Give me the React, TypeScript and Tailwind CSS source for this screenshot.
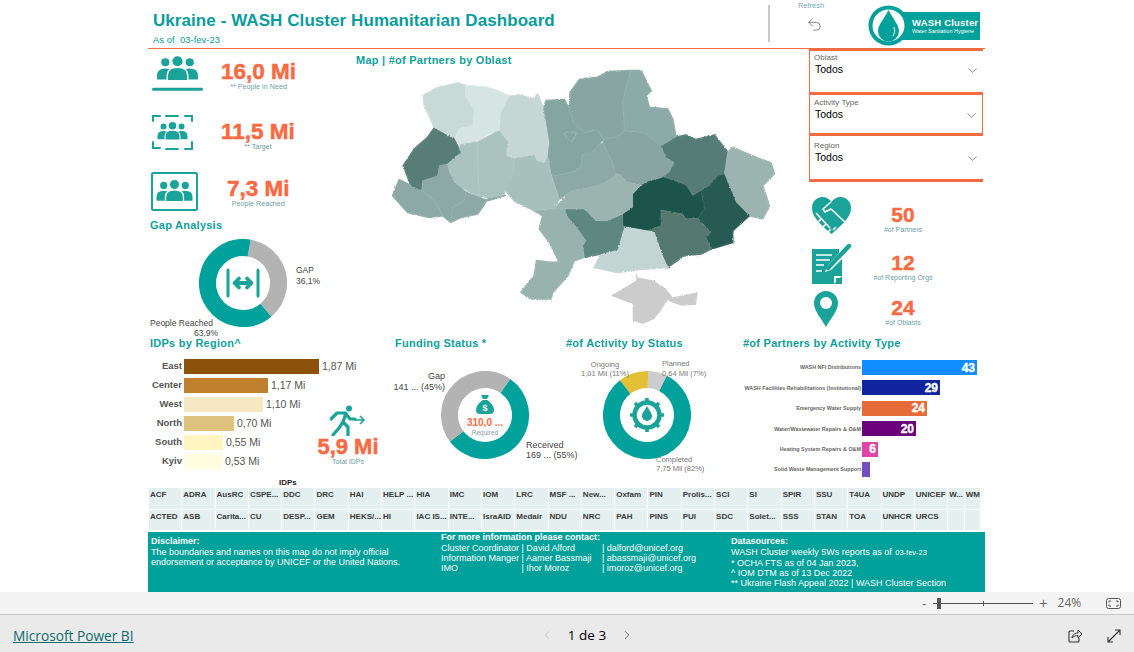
import { ChevronDown, ChevronLeft, ChevronRight, Undo2 } from "lucide-react";

const TEAL = "#1ba39a";

const oblasts: [string, string][] = [
  ["#c8d9d6", "157,108 205,85 260,72 285,80 283,110 310,150 305,200 265,208 250,240 190,207 175,170 160,140"],
  ["#d6e5e3", "285,80 345,85 385,98 415,112 390,160 385,215 355,222 330,240 280,255 265,265 252,240 265,208 305,200 310,150 283,110"],
  ["#c5d6d3", "415,112 450,110 490,120 500,105 518,150 525,190 535,250 530,290 520,312 498,305 490,288 430,298 405,290 412,250 385,215 390,160"],
  ["#85a5a1", "518,150 525,125 580,122 595,150 610,195 640,220 680,212 697,240 685,255 660,285 635,285 630,325 600,340 555,350 540,345 530,290 535,250 525,190"],
  ["#88a5a2", "595,150 598,100 625,62 680,55 710,38 780,35 770,70 755,130 762,215 735,235 697,240 680,212 640,220 610,195"],
  ["#8caaa7", "780,35 810,35 840,95 825,110 835,145 890,150 905,180 915,235 870,262 820,222 762,215 755,130 770,70"],
  ["#88a5a2", "697,240 735,235 762,215 820,222 870,262 885,295 910,310 895,340 865,360 835,365 810,378 770,370 745,345 735,345 715,290 697,255"],
  ["#547b75", "870,262 915,235 945,228 975,242 1030,228 1070,280 1060,345 1040,350 1015,380 990,395 965,410 945,378 890,368 865,360 895,340 910,310 885,295"],
  ["#9cb4b0", "1085,265 1130,285 1200,312 1210,345 1175,380 1195,440 1175,480 1135,470 1095,430 1060,345 1070,280"],
  ["#265a53", "1040,350 1060,345 1095,430 1135,470 1085,515 1085,550 1020,570 1005,535 1020,520 980,478 1000,450 990,395 1015,380"],
  ["#1e524b", "838,365 880,355 945,378 965,410 990,395 1000,450 980,478 945,480 935,465 870,453 870,500 830,515 755,500 755,465 785,445 785,405 810,380"],
  ["#54796f", "870,453 935,465 945,480 980,478 1020,520 1005,535 1020,570 990,585 940,590 890,625 850,520 830,515 870,500"],
  ["#c2d5d2", "760,505 830,515 850,520 870,585 890,625 795,632 740,640 670,625 690,585 740,572 755,520"],
  ["#5f8781", "580,450 640,450 675,485 710,485 755,465 755,500 760,505 755,520 740,572 690,585 640,595 635,560 645,545 620,510 590,475"],
  ["#9cb4b0", "550,450 600,395 680,380 710,365 745,345 770,370 810,378 785,405 785,445 755,465 710,485 675,485 640,450 580,450"],
  ["#8ca9a5", "540,345 555,350 600,340 630,325 635,285 660,285 685,255 697,255 715,290 735,345 710,365 680,380 600,395 565,420"],
  ["#a8c0bc", "430,298 490,288 498,305 520,312 530,290 540,345 565,420 545,450 510,455 490,455 430,425 400,390 425,350"],
  ["#aac2be", "320,250 385,215 412,250 405,290 430,298 425,350 400,390 400,405 350,415 325,410 320,330"],
  ["#abc3bf", "228,315 270,255 320,250 320,330 325,410 290,395 250,370 235,340"],
  ["#587d76", "190,207 250,240 270,280 228,315 205,320 200,350 155,365 150,395 120,380 97,320 130,270 170,235"],
  ["#8ca9a5", "205,320 228,315 235,340 250,370 285,400 280,425 245,445 240,490 215,470 190,425 155,395 155,365 200,350"],
  ["#8ca9a5", "85,362 120,380 150,395 190,425 215,470 175,475 110,460 65,410"],
  ["#8ca9a5", "285,400 350,425 400,410 350,420 320,465 270,475 240,490 245,445 280,425"],
  ["#98b2ae", "490,455 545,450 580,450 590,475 620,510 645,545 635,560 640,595 610,605 590,650 545,700 540,720 480,720 450,700 490,650 497,605 540,610 565,610 535,550 505,510 515,470"],
  ["#cccccc", "795,640 800,655 850,665 885,690 905,715 980,700 975,738 930,740 890,725 850,780 815,795 785,785 785,735 720,710 795,665"],
];

const idps = [
  { name: "East", value: "1,87 Mi", w: 135, color: "#8c510a" },
  { name: "Center", value: "1,17 Mi", w: 84, color: "#bf812d" },
  { name: "West", value: "1,10 Mi", w: 79, color: "#f6e8c3" },
  { name: "North", value: "0,70 Mi", w: 50, color: "#dfc27d" },
  { name: "South", value: "0,55 Mi", w: 39, color: "#fff5c0" },
  { name: "Kyiv", value: "0,53 Mi", w: 38, color: "#fffde0" },
];

const activities = [
  { name: "WASH NFI Distributions", value: "43", w: 115, color: "#118dff" },
  { name: "WASH Facilities Rehabilitations (Institutional)", value: "29", w: 78, color: "#12239e" },
  { name: "Emergency Water Supply", value: "24", w: 65, color: "#e66c37" },
  { name: "Water/Wastewater Repairs & O&M", value: "20", w: 54, color: "#6b007b" },
  { name: "Heating System Repairs & O&M", value: "6", w: 16, color: "#e044a7" },
  { name: "Solid Waste Management Support", value: "", w: 8, color: "#744ec2" },
];

const partners = [
  "ACF", "ADRA", "AusRC", "CSPE...", "DDC", "DRC", "HAI", "HELP ...", "HIA", "IMC", "IOM", "LRC", "MSF ...", "New...", "Oxfam", "PIN", "Prolis...", "SCI", "SI", "SPIR", "SSU", "T4UA", "UNDP", "UNICEF", "W...", "WM",
  "ACTED", "ASB", "Carita...", "CU", "DESP...", "GEM", "HEKS/...", "HI", "IAC IS...", "INTE...", "IsraAID", "Medair", "NDU", "NRC", "PAH", "PINS", "PUI", "SDC", "Solet...", "SSS", "STAN", "TOA", "UNHCR", "URCS", "", "",
];

function PeopleGlyph() {
  return (
    <g fill={TEAL}>
      <circle cx="8" cy="6" r="4" />
      <circle cx="32" cy="6" r="4" />
      <circle cx="20" cy="5" r="5" />
      <path d="M0 23v-4q0-7 8-7t8 7v4z" />
      <path d="M24 23v-4q0-7 8-7t8 7v4z" />
      <path d="M10 24v-5q0-8 10-8t10 8v5z" stroke="#fff" strokeWidth="1.4" />
    </g>
  );
}

function Donut({ segments, rotate }: { segments: { p: number; color: string }[]; rotate: number }) {
  let offset = 0;
  return (
    <svg width="88" height="88" viewBox="0 0 88 88" className="block">
      <g transform={`rotate(${rotate - 90} 44 44)`}>
        {segments.map((s) => {
          const el = (
            <circle
              key={s.color}
              cx="44"
              cy="44"
              r="35.5"
              fill="none"
              stroke={s.color}
              strokeWidth="17"
              pathLength={100}
              strokeDasharray={`${s.p} ${100 - s.p}`}
              strokeDashoffset={-offset}
            />
          );
          offset += s.p;
          return el;
        })}
      </g>
    </svg>
  );
}

function Slicer({ label, className }: { label: string; className: string }) {
  return (
    <div className={`border-[#f26b43] pl-[4px] pr-[2px] ${className}`}>
      <div className="text-[8px] leading-[11px] text-[#666]">{label}</div>
      <div className="flex h-[14px] items-center justify-between pl-[1px] pr-[1px] text-[10.5px] text-black">
        Todos
        <ChevronDown size={15} strokeWidth={0.9} className="text-[#333]" />
      </div>
    </div>
  );
}

function Kpi({ value, label }: { value: string; label: string }) {
  return (
    <div className="flex flex-col items-center">
      <div className="text-[22.5px] font-bold leading-[22px] text-[#f96a42] [-webkit-text-stroke:0.5px_#f96a42]">{value}</div>
      <div className="text-[7.2px] leading-[7px] text-[#6f9ea6]">{label}</div>
    </div>
  );
}

function SmallKpi({ value, label }: { value: string; label: string }) {
  return (
    <div className="flex w-[80px] flex-col items-center">
      <div className="text-[21px] font-bold leading-[20px] text-[#f96a42] [-webkit-text-stroke:0.4px_#f96a42]">{value}</div>
      <div className="text-[7px] leading-[9px] text-[#6f9ea6]">{label}</div>
    </div>
  );
}

function Title({ children, className }: { children: string; className?: string }) {
  return <div className={`text-[11px] font-bold leading-[13px] tracking-[0.25px] text-[#0f9f9c] ${className ?? ""}`}>{children}</div>;
}

export default function App() {
  return (
    <div className="flex h-[652px] w-[1134px] flex-col overflow-hidden bg-white font-['Liberation_Sans',sans-serif]">
      <div className="ml-[148px] flex h-[592px] w-[837px] flex-col">
        {/* header */}
        <div className="flex h-[49px] border-b border-[#f26b43]">
          <div className="w-[620px] pl-[5px] pt-[10px]">
            <div className="text-[17px] font-bold leading-[22px] tracking-[0.07px] text-[#0a9c9c]">Ukraine - WASH Cluster Humanitarian Dashboard</div>
            <div className="mt-[2px] text-[9.5px] leading-[12px] text-[#0a9c9c]">As of&nbsp; 03-fev-23</div>
          </div>
          <div className="mt-[5px] h-[37px] w-[2px] bg-[#c8c8c8]" />
          <div className="ml-[28px] flex w-[26px] flex-col items-center pt-[1px]">
            <div className="text-[7.5px] leading-[9px] text-[#7aa9b5]">Refresh</div>
            <Undo2 size={17} strokeWidth={1} className="mt-[6px] ml-[6px] text-[#555]" />
          </div>
          <div className="relative ml-[44px] mt-[5px] h-[41px] w-[112px]">
            <div className="absolute left-[30px] top-[7px] flex h-[28px] w-[82px] flex-col justify-center bg-[#00a19a] pl-[14px] text-white">
              <div className="text-[9.5px] font-bold leading-[11px] tracking-[0.2px]">WASH Cluster</div>
              <div className="text-[5.5px] leading-[7px]">Water Sanitation Hygiene</div>
            </div>
            <svg width="41" height="41" viewBox="0 0 41 41" className="absolute left-0 top-0">
              <circle cx="20.5" cy="20.5" r="20" fill="#00a19a" />
              <circle cx="20.5" cy="20.5" r="16" fill="#fff" />
              <path d="M20.5 5C16 14 10 20 10 26a10.5 10.5 0 0 0 21 0C31 20 25 14 20.5 5z" fill="#00a19a" />
              <path d="M26 22q2 5-1 9" fill="none" stroke="#fff" strokeWidth="1" />
            </svg>
          </div>
        </div>

        {/* upper part */}
        <div className="flex h-[286px]">
          <div className="relative w-[202px]">
            <div className="flex h-[60px] pl-[4px] pt-[7px]">
              <svg width="51" height="37" viewBox="0 0 50 36" className="block">
                <g transform="translate(5 0)">
                  <PeopleGlyph />
                </g>
                <rect x="0" y="31" width="50" height="3" rx="1.5" fill={TEAL} />
              </svg>
              <div className="ml-[18px] mt-[5px]">
                <Kpi value="16,0 Mi" label="** People in Need" />
              </div>
            </div>
            <div className="flex h-[58px] pl-[4px] pt-[6px]">
              <svg width="41" height="35" viewBox="0 0 41 35" className="block">
                <path d="M1 6V1h7M14 1h12M33 1h7v5M1 27v6h7M14 34h12M33 34h7v-7" fill="none" stroke={TEAL} strokeWidth="2" strokeLinecap="round" />
                <g transform="translate(5.5 7) scale(.75)">
                  <PeopleGlyph />
                </g>
              </svg>
              <div className="ml-[28px] mt-[6px]">
                <Kpi value="11,5 Mi" label="** Target" />
              </div>
            </div>
            <div className="flex h-[55px] pl-[3px]">
              <svg width="47" height="39" viewBox="0 0 47 39" className="mt-[5px] block">
                <rect x="1" y="1" width="45" height="37" rx="1.5" fill="none" stroke={TEAL} strokeWidth="2" />
                <g transform="translate(5.5 8) scale(.9)">
                  <PeopleGlyph />
                </g>
              </svg>
              <div className="ml-[29px] mt-[11px]">
                <Kpi value="7,3 Mi" label="People Reached" />
              </div>
            </div>
            <Title className="ml-[2px] mt-[-3px]">Gap Analysis</Title>

            {/* gap donut */}
            <div className="relative ml-[51px] mt-[7px] h-[88px] w-[88px]">
              <Donut rotate={10} segments={[{ p: 36.1, color: "#b3b3b3" }, { p: 63.9, color: "#00a19a" }]} />
              <svg width="34" height="30" viewBox="0 0 34 30" className="absolute left-[27px] top-[29px]">
                <g stroke={TEAL} strokeLinecap="round" fill="none">
                  <path d="M2 2v26M32 2v26" strokeWidth="3" />
                  <path d="M9 15h16M13 10.500L8.500 15l4.500 4.500M21 10.500l4.500 4.500-4.500 4.500" strokeWidth="3.8" strokeLinejoin="round" />
                </g>
              </svg>
              <div className="absolute left-[97px] top-[26px] w-[40px] text-[8.5px] leading-[11px] text-[#444]">
                GAP
                <br />
                36,1%
              </div>
              <div className="absolute left-[-49px] top-[79px] w-[80px] text-[8.5px] leading-[10px] text-[#444]">
                People Reached
                <div className="pl-[44px]">63,9%</div>
              </div>
            </div>
          </div>

          <div className="w-[459px] pl-[6px] pt-[5px]">
            <Title className="tracking-[0.05px]">Map | #of Partners by Oblast</Title>
            <svg width="410" height="270" viewBox="0 30 1230 810" className="ml-[15px] mt-[2px] block">
              <defs>
                <filter id="rough" x="-2%" y="-2%" width="104%" height="104%">
                  <feTurbulence type="fractalNoise" baseFrequency="0.22" numOctaves="2" seed="4" />
                  <feDisplacementMap in="SourceGraphic" scale="7" xChannelSelector="R" yChannelSelector="G" />
                </filter>
              </defs>
              <g filter="url(#rough)">
                {/* first pass closes the seams between neighbouring oblasts */}
                {oblasts.slice(0, -1).map(([fill, points]) => (
                  <polygon key={points} points={points} fill={fill} stroke={fill} strokeWidth="5" strokeLinejoin="round" />
                ))}
                {oblasts.map(([fill, points]) => (
                  <polygon key={points} points={points} fill={fill} stroke="#ffffff" strokeOpacity="0.22" strokeWidth="1.2" strokeLinejoin="round" />
                ))}
                <path d="M578 222q12-8 22 0 12-8 16 0-4 16-16 28-14-12-22-28z" fill="none" stroke="#a9c0bd" strokeWidth="2" />
              </g>
            </svg>
          </div>

          <div className="w-[176px]">
            <div className="w-[174px]">
              <Slicer label="Oblast" className="h-[43px] border-l border-t-2 pt-[1px]" />
              <Slicer label="Activity Type" className="h-[44px] border-x border-y-[3px] pt-[2px]" />
              <Slicer label="Region" className="h-[46px] border-l border-b-[3px] pt-[4px]" />
            </div>
            <div className="mt-[15px] flex flex-col pl-[3px]">
              <div className="flex h-[47px] items-start">
                <svg width="39" height="40" viewBox="0 0 39 40" className="block">
                  <path d="M19.5 37C8 27 0 20 0 11 0 4 5 0 10.5 0c4 0 7 2 9 5 2-3 5-5 9-5C34 0 39 4 39 11c0 9-8 16-19.5 26z" fill={TEAL} />
                  <path d="M19 5l-8 7 2 3 6-3 14 13M4 16l14 15M9 22l-3 3M14 27l-3 3M19 32l-3 3M24 30l-3 3" fill="none" stroke="#fff" strokeWidth="1.6" strokeLinejoin="round" />
                </svg>
                <div className="ml-[12px] mt-[8px]">
                  <SmallKpi value="50" label="#of Partners" />
                </div>
              </div>
              <div className="flex h-[47px] items-start">
                <svg width="40" height="40" viewBox="0 0 40 40" className="block">
                  <path d="M0 5h27v4L15 22l-2 6 6-2 11-11v25H20l-1 0H0z" fill={TEAL} />
                  <path d="M4 11h16M4 16h14M4 21h8M4 27h6" stroke="#fff" strokeWidth="1.5" />
                  <path d="M22 40v-8h8z" fill="#fff" />
                  <path d="M24 34h5l-5 5z" fill={TEAL} />
                  <path d="M16 24L37 2" stroke={TEAL} strokeWidth="4.5" strokeLinecap="round" />
                </svg>
                <div className="ml-[11px] mt-[9px]">
                  <SmallKpi value="12" label="#of Reporting Orgs" />
                </div>
              </div>
              <div className="flex items-start pl-[2px]">
                <svg width="24" height="37" viewBox="0 0 24 37" className="block">
                  <path d="M12 36C7 27 0 20 0 12a12 12 0 0 1 24 0c0 8-7 15-12 24z" fill={TEAL} />
                  <circle cx="12" cy="12" r="6" fill="#fff" />
                </svg>
                <div className="ml-[25px] mt-[7px]">
                  <SmallKpi value="24" label="#of Oblasts" />
                </div>
              </div>
            </div>
          </div>
        </div>

        {/* lower charts */}
        <div className="flex h-[142px]">
          <div className="relative w-[237px] pt-[2px]">
            <Title className="ml-[2px]">IDPs by Region^</Title>
            <div className="mt-[9px] flex flex-col gap-[4px]">
              {idps.map((r) => (
                <div key={r.name} className="flex h-[15px] items-center">
                  <div className="w-[36px] pr-[2px] text-right text-[9.5px] font-bold text-[#555]">{r.name}</div>
                  <div className="h-[15px]" style={{ width: r.w, backgroundColor: r.color }} />
                  <div className="ml-[3px] text-[10.5px] text-[#555]">{r.value}</div>
                </div>
              ))}
            </div>
            <div className="absolute left-[165px] top-[70px] flex w-[70px] flex-col items-center">
              <svg width="36" height="31" viewBox="0 0 36 31" className="block">
                <circle cx="19" cy="3.5" r="3" fill={TEAL} />
                <path d="M1 14L7 8l9 0-3 9 5 5v8M13 17l-4 6-6 7M16 9l4 5 5 0" fill="none" stroke={TEAL} strokeWidth="3.2" strokeLinecap="round" strokeLinejoin="round" />
                <path d="M24 15h10M30 11l4 4-4 4" fill="none" stroke={TEAL} strokeWidth="1.6" />
              </svg>
              <div className="text-[22px] font-bold leading-[22px] text-[#f96a42] [-webkit-text-stroke:0.5px_#f96a42]">5,9 Mi</div>
              <div className="text-[7px] leading-[7px] text-[#6f9ea6]">Total IDPs</div>
            </div>
          </div>

          <div className="w-[180px] pt-[2px]">
            <Title className="ml-[10px]">Funding Status *</Title>
            <div className="relative ml-[56px] mt-[21px] h-[88px] w-[88px]">
              <Donut rotate={35} segments={[{ p: 55, color: "#00a19a" }, { p: 45, color: "#b3b3b3" }]} />
              <div className="absolute inset-0 flex flex-col items-center pt-[24px]">
                <svg width="18" height="19" viewBox="0 0 18 19" className="block">
                  <path d="M5 0h8l-2 4H7zM7 5h4c3 2 7 6 7 10 0 3-2 4-4 4H4c-2 0-4-1-4-4 0-4 4-8 7-10z" fill={TEAL} />
                  <text x="9" y="16" fontSize="9" fontWeight="700" fill="#fff" textAnchor="middle">$</text>
                </svg>
                <div className="mt-[3px] text-[10px] font-bold leading-[11px] text-[#f96a42]">310,0 ...</div>
                <div className="mt-[1px] text-[6.5px] leading-[8px] text-[#8a9ea3]">Required</div>
              </div>
              <div className="absolute left-[-48px] top-[0px] w-[52px] text-right text-[9px] leading-[11px] text-[#444]">
                <div>Gap</div>
                141 ... (45%)
              </div>
              <div className="absolute left-[85px] top-[69px] w-[60px] text-[9px] leading-[10px] text-[#444]">
                Received
                <br />
                169 ... (55%)
              </div>
            </div>
          </div>

          <div className="w-[175px] pt-[2px]">
            <Title className="ml-[1px]">#of Activity by Status</Title>
            <div className="relative ml-[38px] mt-[21px] h-[88px] w-[88px]">
              <Donut
                rotate={-38}
                segments={[
                  { p: 11, color: "#e2bf35" },
                  { p: 7, color: "#cccccc" },
                  { p: 82, color: "#00a19a" },
                ]}
              />
              <svg width="36" height="36" viewBox="0 0 36 36" className="absolute left-[26px] top-[26px]">
                <circle cx="18" cy="18" r="12.5" fill="none" stroke={TEAL} strokeWidth="4.5" />
                <g stroke={TEAL} strokeWidth="3.6">
                  <path d="M18 1v5M18 30v5M1 18h5M30 18h5M6 6l3.5 3.5M26.5 26.5L30 30M6 30l3.5-3.5M26.5 9.5L30 6" />
                </g>
                <path d="M18 9c-2 4-5 7-5 10a5 5 0 0 0 10 0c0-3-3-6-5-10z" fill={TEAL} />
              </svg>
              <div className="absolute left-[-23px] top-[-11px] w-[50px] text-center text-[7.5px] leading-[9px] text-[#777]">
                Ongoing
                <br />
                1,01 Mil (11%)
              </div>
              <div className="absolute left-[59px] top-[-12px] w-[50px] text-[7.5px] leading-[10px] text-[#777]">
                Planned
                <br />
                0,64 Mil (7%)
              </div>
              <div className="absolute left-[53px] top-[84px] w-[54px] text-[7.5px] leading-[9px] text-[#777]">
                Completed
                <br />
                7,75 Mil (82%)
              </div>
            </div>
          </div>

          <div className="w-[245px] pt-[2px]">
            <Title className="ml-[3px]">#of Partners by Activity Type</Title>
            <div className="mt-[10px] flex flex-col gap-[5.4px]">
              {activities.map((a) => (
                <div key={a.name} className="flex h-[15px] items-center">
                  <div className="w-[122px] whitespace-nowrap pr-[1px] text-right text-[5.4px] font-bold text-[#666]">{a.name}</div>
                  <div
                    className="flex h-[15px] items-center justify-end pr-[2px] text-[12px] font-bold text-white [-webkit-text-stroke:0.4px_#fff]"
                    style={{ width: a.w, backgroundColor: a.color }}
                  >
                    {a.value}
                  </div>
                </div>
              ))}
            </div>
          </div>
        </div>

        {/* partner table */}
        <div className="h-[55px]">
          <div className="ml-[131px] text-[8px] font-bold leading-[11px] text-[#222]">IDPs</div>
          <div className="ml-[1px] grid w-[832px] grid-cols-[repeat(24,32.3px)_15.5px_15.5px] gap-[1px]">
            {partners.map((p, i) => (
              <div key={i} className="h-[20.5px] overflow-hidden whitespace-nowrap bg-[#e3f0ef] pl-[1px] pt-[1px] text-[8px] font-bold leading-[11px] text-[#3a3a3a]">
                {p}
              </div>
            ))}
          </div>
        </div>

        {/* footer notes */}
        <div className="flex h-[60px] bg-[#00a19a] text-[9px] leading-[10px] text-white">
          <div className="w-[293px] pl-[3px] pt-[4px]">
            <div className="mb-[1px] font-bold">Disclaimer:</div>
            The boundaries and names on this map do not imply official
            <br />
            endorsement or acceptance by UNICEF or the United Nations.
          </div>
          <div className="w-[290px]">
            <div className="font-bold">For more information please contact:</div>
            <div className="mt-[1px] flex">
              <div className="w-[161px] whitespace-nowrap">
                Cluster Coordinator | David Alford
                <br />
                Information Manger | Aamer Bassmaji
                <br />
                IMO <span className="ml-[61px]">| Ihor Moroz</span>
              </div>
              <div className="whitespace-nowrap">
                | dalford@unicef.org
                <br />
                | abassmaji@unicef.org
                <br />
                | imoroz@unicef.org
              </div>
            </div>
          </div>
          <div className="whitespace-nowrap pt-[4px]">
            <div className="mb-[1px] font-bold">Datasources:</div>
            WASH Cluster weekly 5Ws reports as of <span className="ml-[1px] text-[7.5px]">03-fev-23</span>
            <br />* OCHA FTS as of 04 Jan 2023,
            <br />^ IOM DTM as of 13 Dec 2022
            <br />** Ukraine Flash Appeal 2022 | WASH Cluster Section
          </div>
        </div>
      </div>

      {/* zoom bar */}
      <div className="flex h-[23px] items-center border-b border-[#c8c8c8] bg-[#f4f4f4] pl-[922px] text-[#666]">
        <div className="text-[13px] leading-none">-</div>
        <div className="relative ml-[7px] h-[1px] w-[100px] bg-[#555]">
          <div className="absolute left-[4px] top-[-5px] h-[11px] w-[4px] bg-[#555]" />
          <div className="absolute left-[50px] top-[-2px] h-[5px] w-[1px] bg-[#555]" />
        </div>
        <div className="ml-[6px] text-[14px] leading-none">+</div>
        <div className="ml-[10px] font-['Open_Sans',sans-serif] text-[12px]">24%</div>
        <svg width="15" height="11" viewBox="0 0 15 11" className="ml-[25px] block">
          <rect x=".5" y=".5" width="14" height="10" rx="2" fill="none" stroke="#555" />
          <path d="M3 4.500V3h2M10 3h2v1.500M3 6.500V8h2M10 8h2V6.500" fill="none" stroke="#555" />
        </svg>
      </div>

      {/* power bi footer */}
      <div className="relative flex flex-1 items-center justify-center bg-[#eaeaea] pl-[40px] pt-[3px]">
        <div className="absolute left-[13px] top-[12px] font-['Open_Sans',sans-serif] text-[13.7px] leading-[18px] text-[#0f6a6a] underline">Microsoft Power BI</div>
        <div className="flex items-center font-['Open_Sans',sans-serif] text-[13.5px] text-black">
          <ChevronLeft size={14} strokeWidth={1.2} className="text-[#bbb]" />
          <span className="mx-[14px]">1 de 3</span>
          <ChevronRight size={14} strokeWidth={1.4} className="text-[#444]" />
        </div>
        <svg width="14" height="14" viewBox="0 0 14 14" className="absolute left-[1068px] top-[14px]">
          <path d="M6 2H2a1 1 0 0 0-1 1v9a1 1 0 0 0 1 1h8a1 1 0 0 0 1-1V9" fill="none" stroke="#333" strokeWidth="1.1" />
          <path d="M4 9c0-3 3-5 6-5V1l4 4-4 4V6.500C8 6.500 6 7 4 9z" fill="none" stroke="#333" strokeWidth="1" />
        </svg>
        <svg width="14" height="14" viewBox="0 0 14 14" className="absolute left-[1107px] top-[14px]">
          <path d="M1 13L13 1M8 1h5v5M1 8v5h5" fill="none" stroke="#333" strokeWidth="1.1" />
        </svg>
      </div>
    </div>
  );
}
